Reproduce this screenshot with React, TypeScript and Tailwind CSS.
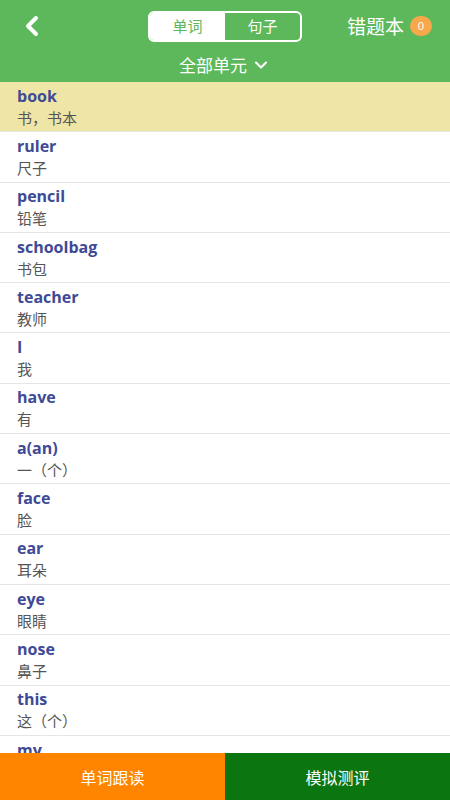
import { ChevronLeft, ChevronDown } from "lucide-react";

const words = [
  { en: "book", zh: "书，书本" },
  { en: "ruler", zh: "尺子" },
  { en: "pencil", zh: "铅笔" },
  { en: "schoolbag", zh: "书包" },
  { en: "teacher", zh: "教师" },
  { en: "I", zh: "我" },
  { en: "have", zh: "有" },
  { en: "a(an)", zh: "一（个）" },
  { en: "face", zh: "脸" },
  { en: "ear", zh: "耳朵" },
  { en: "eye", zh: "眼睛" },
  { en: "nose", zh: "鼻子" },
  { en: "this", zh: "这（个）" },
  { en: "my", zh: "我的" },
];

const cjk = { fontFamily: '"Noto Sans CJK SC", "Noto Sans", sans-serif' };
const latin = { fontFamily: '"Open Sans", "Noto Sans CJK SC", sans-serif' };

export default function App() {
  return (
    <div className="w-[450px] h-[800px] flex flex-col bg-white overflow-hidden" style={cjk}>
      <header className="bg-[#5cb85a] h-[82px] shrink-0 flex flex-col">
        <div className="h-[52px] flex items-center px-4 relative">
          <ChevronLeft className="w-8 h-8 text-white" strokeWidth={3} />
          <div className="absolute left-[148px] top-[11px] w-[154px] h-[31px] flex border-2 border-white rounded-[6px] overflow-hidden">
            <div className="flex-1 bg-white text-[#5cb85a] text-[15px] flex items-center justify-center">单词</div>
            <div className="flex-1 text-white text-[15px] flex items-center justify-center">句子</div>
          </div>
          <div className="ml-auto flex items-center gap-[6px] pr-[2px]">
            <span className="text-white text-[19px]">错题本</span>
            <span className="w-[22px] h-[20px] rounded-full bg-[#f6a84a] text-white text-[11px] flex items-center justify-center" style={latin}>0</span>
          </div>
        </div>
        <div className="flex-1 flex items-center justify-center gap-1 text-white text-[17px] pb-[4px]">
          <span>全部单元</span>
          <ChevronDown className="w-5 h-5" strokeWidth={2.5} />
        </div>
      </header>

      <ul className="flex-1 overflow-hidden">
        {words.map((w, i) => (
          <li
            key={w.en}
            className={`h-[50.3px] border-b border-[#e6e6e6] px-[17px] flex flex-col justify-center ${i === 0 ? "bg-[#efe5a6]" : "bg-white"}`}
          >
            <span className="text-[#3e4a96] text-[16px] font-bold leading-[22px]" style={latin}>{w.en}</span>
            <span className="text-[#555] text-[15px] leading-[22px]">{w.zh}</span>
          </li>
        ))}
      </ul>

      <footer className="h-[47px] shrink-0 flex">
        <button className="flex-1 bg-[#ff8500] text-white text-[16px]">单词跟读</button>
        <button className="flex-1 bg-[#0b7510] text-white text-[16px]">模拟测评</button>
      </footer>
    </div>
  );
}
